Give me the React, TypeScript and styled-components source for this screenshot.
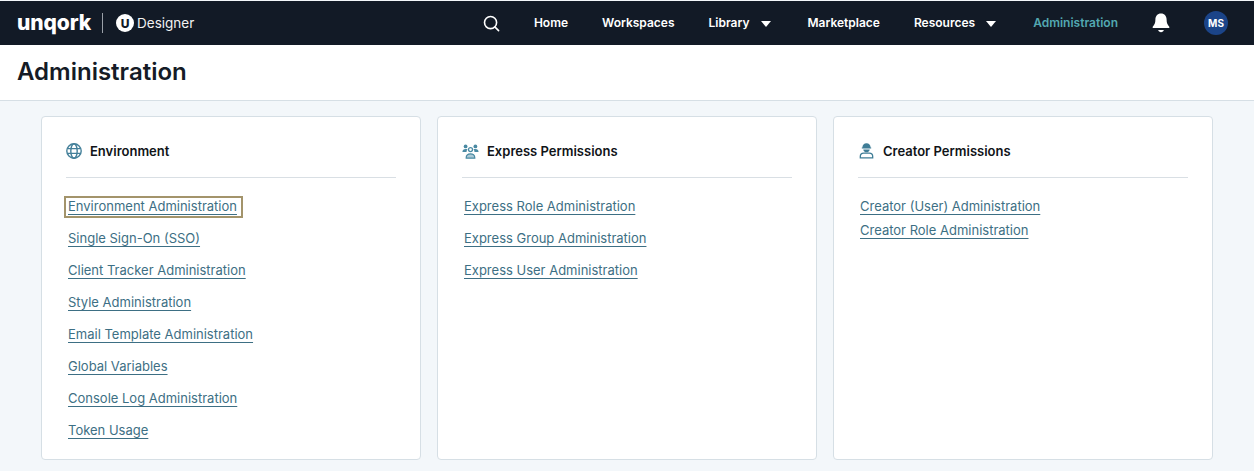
import React from "react";
import styled, { createGlobalStyle } from "styled-components";

const GlobalStyle = createGlobalStyle`
  html, body {
    margin: 0;
    padding: 0;
    background: #f3f7fa;
    font-family: "Inter", "Liberation Sans", sans-serif;
  }
`;

const Page = styled.div`
  width: 1254px;
  height: 471px;
  overflow: hidden;
  padding-top: 1px;
  box-sizing: border-box;
  background: #f3f7fa;
`;

const NavBar = styled.header`
  height: 44px;
  background: #121a26;
  display: flex;
  align-items: center;
  padding: 0 26px 0 17px;
`;

const Brand = styled.div`
  display: flex;
  align-items: center;
  color: #fff;
`;

const Wordmark = styled.span`
  font-size: 21px;
  font-weight: 800;
  letter-spacing: -0.1px;
  line-height: 1;
  margin-top: -2px;
`;

const BrandDivider = styled.span`
  width: 1px;
  height: 20px;
  background: #9aa0a8;
  margin: 0 13px 0 11px;
`;

const BrandBadge = styled.span`
  width: 18px;
  height: 18px;
  border-radius: 50%;
  background: #fff;
  color: #121a26;
  font-size: 12px;
  font-weight: 800;
  display: flex;
  align-items: center;
  justify-content: center;
  margin-right: 3px;
`;

const BrandName = styled.span`
  font-size: 13.5px;
  font-weight: 400;
  color: #f2f2f2;
`;

const NavItems = styled.nav`
  margin-left: auto;
  display: flex;
  align-items: center;
`;

const SearchButton = styled.span`
  display: flex;
  margin-right: 34px;
`;

const NavItem = styled.a<{ $active?: boolean; $hasMenu?: boolean }>`
  display: flex;
  align-items: center;
  gap: 11px;
  padding-bottom: 2px;
  font-size: 12px;
  font-weight: 600;
  color: ${(p) => (p.$active ? "#52a8b1" : "#fff")};
  margin-right: ${(p) => (p.$hasMenu ? 37 : 34)}px;
  white-space: nowrap;
`;

const Caret = styled.span`
  width: 0;
  height: 0;
  border-left: 5px solid transparent;
  border-right: 5px solid transparent;
  border-top: 6px solid #fff;
  margin-top: 3px;
`;

const BellWrap = styled.span`
  display: flex;
  margin-right: 34px;
`;

const Avatar = styled.span`
  width: 24px;
  height: 24px;
  border-radius: 50%;
  background: #1b4488;
  color: #fff;
  font-size: 10px;
  font-weight: 700;
  display: flex;
  align-items: center;
  justify-content: center;
`;

const TitleBar = styled.div`
  height: 56px;
  box-sizing: border-box;
  background: #fff;
  border-bottom: 1px solid #d6dfe5;
  display: flex;
  align-items: center;
  padding: 0 0 2px 17px;
`;

const PageTitle = styled.h1`
  margin: 0;
  font-size: 24px;
  font-weight: 600;
  color: #151b26;
`;

const CardRow = styled.main`
  display: grid;
  grid-template-columns: repeat(3, 380px);
  gap: 16px;
  padding: 15px 0 0 41px;
`;

const Card = styled.section`
  height: 344px;
  box-sizing: border-box;
  background: #fff;
  border: 1px solid #d6dfe5;
  border-radius: 4px;
  padding: 0 24px;
`;

const CardHeader = styled.div`
  height: 61px;
  box-sizing: border-box;
  padding-top: 7px;
  border-bottom: 1px solid #d9dfe4;
  display: flex;
  align-items: center;
  gap: 8px;
  font-size: 13px;
  font-weight: 600;
  color: #101418;
`;

const LinkList = styled.ul<{ $gap: number }>`
  list-style: none;
  margin: 0;
  padding: 18px 0 0 2px;
  display: flex;
  flex-direction: column;
  gap: ${(p) => p.$gap}px;
`;

const LinkItem = styled.li`
  height: 20px;
  display: flex;
  align-items: center;
`;

const PageLink = styled.a<{ $focused?: boolean }>`
  font-size: 13px;
  font-weight: 400;
  color: #3d6f84;
  text-decoration: underline;
  text-underline-offset: 3px;
  text-decoration-thickness: 1px;
  white-space: nowrap;
  ${(p) =>
    p.$focused &&
    "outline: 2px solid #a3946b; padding: 0 4px 2px 2px; margin: 2px -4px 0 -2px;"}
`;

const GlobeIcon = () => (
  <svg width="16" height="16" viewBox="0 0 16 16" fill="none" stroke="#44809a" strokeWidth="1.4">
    <circle cx="8" cy="8" r="7.2" />
    <ellipse cx="8" cy="8" rx="3.2" ry="7.2" />
    <path d="M1.300 5.600h13.400M1.300 10.400h13.400" />
  </svg>
);

const TeamIcon = () => (
  <svg width="17" height="16" viewBox="0 0 17 16" fill="#4a8aa3">
    <circle cx="3.600" cy="3.400" r="1.900" />
    <circle cx="13.400" cy="3.400" r="1.900" />
    <path d="M0.400 9c0-1.800 1.300-2.900 3.200-2.900 .8 0 1.400.1 1.900.5-.7.600-1 1.400-1 2.400H0.400z" />
    <path d="M16.600 9c0-1.800-1.300-2.900-3.200-2.900-.8 0-1.400.1-1.900.5.7.600 1 1.400 1 2.400h4.100z" />
    <circle cx="8.500" cy="6.600" r="2" fill="none" stroke="#4a8aa3" strokeWidth="1.300" />
    <path d="M4.200 14.800c0-2.600 1.900-4 4.300-4s4.300 1.400 4.300 4v.4H4.200v-.4z" fill="#4a8aa3" fillOpacity="0.45" stroke="#4a8aa3" strokeWidth="1.200" />
  </svg>
);

const WorkerIcon = () => (
  <svg width="17" height="17" viewBox="-2 0 17 17" fill="#3f7d96">
    <path d="M2.400 5.400C2.400 3 4 1.200 6.500 1.200s4.100 1.800 4.100 4.200h.6v1H1.800v-1h.6z" />
    <path d="M3.300 7.400h6.400c-.2 1.800-1.500 2.900-3.200 2.900S3.500 9.200 3.300 7.400z" />
    <path d="M0.300 15.800v-1.400c0-2 1.600-3.200 3.400-3.200h5.600c1.800 0 3.400 1.200 3.400 3.200v1.400H0.300z" fill="none" stroke="#3f7d96" strokeWidth="1.300" />
  </svg>
);

const sections = [
  {
    title: "Environment",
    icon: <GlobeIcon />,
    gap: 12,
    links: [
      "Environment Administration",
      "Single Sign-On (SSO)",
      "Client Tracker Administration",
      "Style Administration",
      "Email Template Administration",
      "Global Variables",
      "Console Log Administration",
      "Token Usage",
    ],
  },
  {
    title: "Express Permissions",
    icon: <TeamIcon />,
    gap: 12,
    links: ["Express Role Administration", "Express Group Administration", "Express User Administration"],
  },
  {
    title: "Creator Permissions",
    icon: <WorkerIcon />,
    gap: 4,
    links: ["Creator (User) Administration", "Creator Role Administration"],
  },
];

export default function App() {
  return (
    <Page>
      <GlobalStyle />
      <NavBar>
        <Brand>
          <Wordmark>unqork</Wordmark>
          <BrandDivider />
          <BrandBadge>U</BrandBadge>
          <BrandName>Designer</BrandName>
        </Brand>
        <NavItems>
          <SearchButton>
            <svg width="17" height="17" viewBox="0 0 18 18" fill="none" stroke="#fff" strokeWidth="1.7" strokeLinecap="round">
              <circle cx="8" cy="8" r="6.4" />
              <path d="M12.800 12.800L16.500 16.500" />
            </svg>
          </SearchButton>
          <NavItem>Home</NavItem>
          <NavItem>Workspaces</NavItem>
          <NavItem $hasMenu>
            Library <Caret />
          </NavItem>
          <NavItem>Marketplace</NavItem>
          <NavItem $hasMenu>
            Resources <Caret />
          </NavItem>
          <NavItem $active>Administration</NavItem>
          <BellWrap>
            <svg width="18" height="20" viewBox="0 0 18 20" fill="#fff">
              <path d="M9 0.500c3.600 0 5.600 2.700 5.600 6.100 0 3.600 1 5.400 2.700 7.200v1.200H0.700v-1.200c1.700-1.800 2.700-3.600 2.700-7.200C3.400 3.200 5.400 0.500 9 0.500z" />
              <path d="M6.200 17h5.600c-.3 1.300-1.400 2.200-2.800 2.200S6.500 18.300 6.200 17z" />
            </svg>
          </BellWrap>
          <Avatar>MS</Avatar>
        </NavItems>
      </NavBar>
      <TitleBar>
        <PageTitle>Administration</PageTitle>
      </TitleBar>
      <CardRow>
        {sections.map((section) => (
          <Card key={section.title}>
            <CardHeader>
              {section.icon}
              {section.title}
            </CardHeader>
            <LinkList $gap={section.gap}>
              {section.links.map((link, i) => (
                <LinkItem key={link}>
                  <PageLink href="#" $focused={section.title === "Environment" && i === 0}>
                    {link}
                  </PageLink>
                </LinkItem>
              ))}
            </LinkList>
          </Card>
        ))}
      </CardRow>
    </Page>
  );
}
